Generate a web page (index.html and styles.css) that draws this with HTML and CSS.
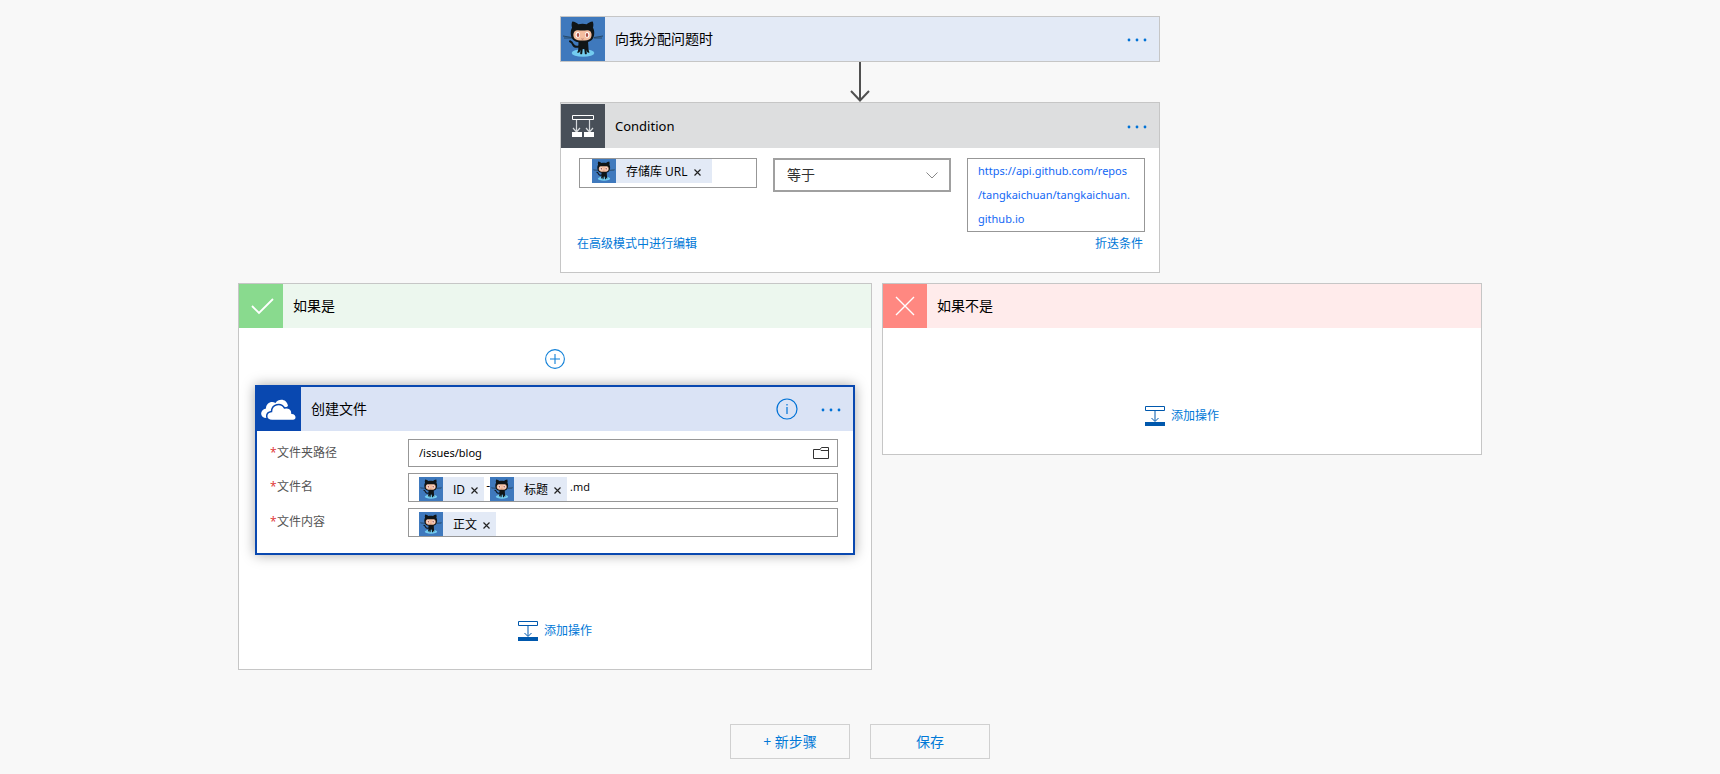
FILE: index.html
```
<!DOCTYPE html>
<html lang="zh-CN">
<head>
<meta charset="utf-8">
<meta name="viewport" content="width=device-width, initial-scale=1">
<title>Flow</title>
<link rel="stylesheet" href="styles.css">
</head>
<body>
<svg class="sprite" aria-hidden="true">
  <symbol id="octocat" viewBox="0 0 44 44">
    <rect width="44" height="44" fill="#3f79bd"/>
    <ellipse cx="22" cy="36" rx="11.300" ry="3.800" fill="#74cdf0"/>
    <path d="M2 19l9 1.500M42 19l-9 1.500M3 21l8 0M41 21l-8 0" stroke="#24435f" stroke-width=".9" fill="none"/>
    <path d="M18 29.500c-3 .8-5 .2-6-2-.6-1.500-1.500-2.600-3-3.200" fill="none" stroke="#101517" stroke-width="2" stroke-linecap="round"/>
    <path d="M17.500 24h9.500l.5 8q.3 2 1 3.500-1.500.8-2.400-.7l-.6-2 .3 4.200q-1.300.8-2-.3l-.5-4.700h-1.600l-.5 4.700q-.8 1.100-2 .3l.3-4.200-.8 2.200q-1 1.300-2.600.5 1-1.500 1.200-3.500z" fill="#101517"/>
    <path d="M11.300 4.500c-.9 2-.9 4.200-.2 6.200C9.300 13 9.400 18 10.800 21c1.800 3.700 6.200 4.500 10.700 4.500s8.900-.8 10.700-4.500c1.400-3 1.500-8-.3-10.300.7-2 .7-4.200-.2-6.200-2.500.1-4.500 1.500-6 2.800-2.700-.8-5.700-.8-8.400 0-1.500-1.300-3.500-2.700-6-2.800z" fill="#101517"/>
    <path d="M14.500 13.700c2.200-.9 4.500-.2 7-.2s4.800-.7 7 .2c2.500 1.200 2.700 5.500 1 7.700-1.600 1.800-4.700 2-8 2s-6.400-.2-8-2c-1.700-2.200-1.500-6.500 1-7.700z" fill="#f4bd9f"/>
    <ellipse cx="16.800" cy="17.800" rx="2.200" ry="2.900" fill="#fff"/>
    <ellipse cx="26.200" cy="17.800" rx="2.200" ry="2.900" fill="#fff"/>
    <ellipse cx="17" cy="17.900" rx="1.300" ry="2" fill="#aa5147"/>
    <ellipse cx="26" cy="17.900" rx="1.300" ry="2" fill="#aa5147"/>
    <path d="M20.500 21.800q1 .8 2 0" stroke="#a15a4e" stroke-width=".8" fill="none"/>
  </symbol>
  <symbol id="condition" viewBox="0 0 44 44">
    <rect width="44" height="44" fill="#484f58"/>
    <path d="M11.500 11.500h21v4h-21z" fill="none" stroke="#fff"/>
    <path d="M15.500 16v11M28.500 16v11M12 24l3.500 4 3.500-4M25 24l3.500 4 3.500-4" fill="none" stroke="#d5d8db" stroke-width="1.200"/>
    <path d="M11 28h10v5H11zM23 28h10v5H23z" fill="#fff"/>
  </symbol>
  <symbol id="insert" viewBox="0 0 20 20">
    <path d="M.5.500h19v4H.5z" fill="#fff" stroke="#0058ad"/>
    <path d="M10 5v10M6.500 12l3.500 3.500 3.500-3.500" fill="none" stroke="#0058ad"/>
    <path d="M0 16h20v4H0z" fill="#0058ad"/>
  </symbol>
  <symbol id="dots" viewBox="0 0 20 4">
    <circle cx="2" cy="2" r="1.400"/><circle cx="10" cy="2" r="1.400"/><circle cx="18" cy="2" r="1.400"/>
  </symbol>
</svg>

<main class="flow">
  <section class="card">
    <header class="head head-trigger">
      <svg class="tile"><use href="#octocat"/></svg>
      <h2 class="title">向我分配问题时</h2>
      <button class="menu" aria-label="更多"><svg class="dots"><use href="#dots"/></svg></button>
    </header>
  </section>

  <svg class="arrow" viewBox="0 0 20 40" aria-hidden="true"><path d="M10 0v39M1 29l9 9.500 9-9.500" fill="none" stroke="#505050" stroke-width="2"/></svg>

  <section class="card">
    <header class="head head-condition">
      <svg class="tile"><use href="#condition"/></svg>
      <h2 class="title latin">Condition</h2>
      <button class="menu" aria-label="更多"><svg class="dots"><use href="#dots"/></svg></button>
    </header>
    <div class="rule">
      <div class="operand operand-left">
        <span class="token token-wide"><svg class="badge"><use href="#octocat"/></svg><span>存储库 URL</span><button class="remove" aria-label="删除"><svg class="x" viewBox="0 0 7 7"><path d="M.5.500l6 6M6.500.500l-6 6"/></svg></button></span>
      </div>
      <div class="choice">
        <select class="select" aria-label="运算符"><option>等于</option></select>
        <svg class="chevron" viewBox="0 0 12 7" aria-hidden="true"><path d="M.5.500L6 6 11.500.500"/></svg>
      </div>
      <div class="operand operand-right">https://api.github.com/repos<br>/tangkaichuan/tangkaichuan.<br>github.io</div>
    </div>
    <div class="links"><a class="link" href="#">在高级模式中进行编辑</a><a class="link" href="#">折迭条件</a></div>
  </section>

  <div class="branches">
    <section class="branch branch-yes">
      <header class="head head-yes">
        <svg class="tile tile-yes" viewBox="0 0 44 44"><path d="M13 22l7 7 14-14" fill="none" stroke="#fff" stroke-width="1.800"/></svg>
        <h2 class="title">如果是</h2>
      </header>
      <button class="plus" aria-label="插入步骤"><svg class="plus-icon" viewBox="0 0 20 20"><circle cx="10" cy="10" r="9.400"/><path d="M10 5v10M5 10h10"/></svg></button>
      <section class="action">
        <header class="head head-action">
          <svg class="tile tile-cloud" viewBox="0 0 44 44">
            <path d="M13 31H9.500C2.500 31 2.500 22.500 9 21.500 9 16 14.500 13.500 18.500 16c3-5 11.500-4.500 12.500 3z" fill="#fff"/>
            <path d="M15 33.400C8 33 8 25.500 14.500 24.500c.3-7.500 9.500-9.500 13-3.500 5-1 7.500 2 7.500 5.300 5.500.7 5.500 7.100 1 7.100z" fill="#fff" stroke="#0948b0" stroke-width="1.500"/>
          </svg>
          <h2 class="title">创建文件</h2>
          <button class="info" aria-label="信息"><svg class="info-icon" viewBox="0 0 22 22"><circle cx="11" cy="11" r="10"/><path d="M11 9v7M11 6v1.500"/></svg></button>
          <button class="menu" aria-label="更多"><svg class="dots"><use href="#dots"/></svg></button>
        </header>
        <div class="fields">
          <label class="label" for="path"><span class="star">*</span>文件夹路径</label>
          <div class="box box-path"><input class="path" id="path" value="/issues/blog"><button class="browse" aria-label="浏览"><svg class="folder" viewBox="0 0 16 12"><path d="M.5 2.500H7L8.500.500h7v11H.5zM7 2.500l1 1h7.500"/></svg></button></div>
          <span class="label"><span class="star">*</span>文件名</span>
          <div class="box box-tokens">
            <span class="token"><svg class="badge"><use href="#octocat"/></svg><span>ID</span><button class="remove" aria-label="删除"><svg class="x" viewBox="0 0 7 7"><path d="M.5.500l6 6M6.500.500l-6 6"/></svg></button></span><span class="joint">-</span><span class="token"><svg class="badge"><use href="#octocat"/></svg><span>标题</span><button class="remove" aria-label="删除"><svg class="x" viewBox="0 0 7 7"><path d="M.5.500l6 6M6.500.500l-6 6"/></svg></button></span><span class="suffix">.md</span>
          </div>
          <span class="label"><span class="star">*</span>文件内容</span>
          <div class="box box-tokens">
            <span class="token"><svg class="badge"><use href="#octocat"/></svg><span>正文</span><button class="remove" aria-label="删除"><svg class="x" viewBox="0 0 7 7"><path d="M.5.500l6 6M6.500.500l-6 6"/></svg></button></span>
          </div>
        </div>
      </section>
      <button class="add"><svg class="add-icon"><use href="#insert"/></svg>添加操作</button>
    </section>

    <section class="branch branch-no">
      <header class="head head-no">
        <svg class="tile tile-no" viewBox="0 0 44 44"><path d="M13 13l18 18M31 13L13 31" fill="none" stroke="#fff" stroke-width="1.400"/></svg>
        <h2 class="title">如果不是</h2>
      </header>
      <button class="add"><svg class="add-icon"><use href="#insert"/></svg>添加操作</button>
    </section>
  </div>

  <div class="footer"><button class="button">+ 新步骤</button><button class="button">保存</button></div>
</main>
</body>
</html>
```
FILE: styles.css
```
* { box-sizing: border-box; }

body {
  margin: 0;
  background: #f8f8f8;
  color: #000;
  font: 12px/24px "Open Sans", "Noto Sans CJK SC", sans-serif;
}

button, input, select { font: inherit; color: inherit; }
button { padding: 0; border: 0; background: none; cursor: pointer; }
svg { display: block; flex: none; }

.sprite { position: absolute; width: 0; height: 0; }

.flow {
  display: flex;
  flex-direction: column;
  align-items: center;
  padding: 16px;
}

.card {
  width: 100%;
  max-width: 600px;
  border: 1px solid #c6c6c6;
  background: #fff;
}

.head { display: flex; align-items: center; min-height: 44px; }
.head-trigger { background: #e3eaf6; }
.head-condition { padding-top: 1px; background: #dddedf; }
.head-yes { background: #ecf7ee; }
.head-no { background: #ffebeb; }
.head-action { background: #dae3f5; }

.tile { width: 44px; height: 44px; }
.tile-yes { background: #89da8e; }
.tile-no { background: #ff8881; }
.tile-cloud { background: #0948b0; }

.title { flex: 1; margin: 0; padding-left: 10px; font-size: 14px; font-weight: 400; }
.latin { font-family: "Noto Sans", "Noto Sans CJK SC", sans-serif; font-size: 13px; }

.menu { padding: 12px 12px 10px 10px; fill: #0072d6; }
.dots { width: 20px; height: 4px; }

.arrow { width: 20px; height: 40px; }

.rule {
  display: grid;
  grid-template-columns: repeat(3, 1fr);
  align-items: start;
  gap: 16px;
  padding: 10px 14px 0 18px;
}

.operand { border: 1px solid #979797; }
.operand-left { min-height: 30px; padding-left: 12px; }
.operand-right {
  padding-left: 10px;
  color: #1267f5;
  font-family: "Noto Sans", "Noto Sans CJK SC", sans-serif;
  font-size: 11px;
}

.choice { display: grid; align-items: center; }
.select {
  grid-area: 1 / 1;
  width: 100%;
  height: 34px;
  padding: 0 12px;
  border: 2px solid #a0a0a0;
  border-radius: 0;
  appearance: none;
  background: #fff;
  color: #333;
  font-size: 14px;
}
.chevron {
  grid-area: 1 / 1;
  justify-self: end;
  width: 12px;
  height: 7px;
  margin-right: 13px;
  fill: none;
  stroke: #888;
  pointer-events: none;
}

.token { display: inline-flex; align-items: center; height: 24px; padding-right: 6px; background: #e3eaf6; line-height: 22px; vertical-align: top; }
.token > span { padding-top: 2px; }
.token-wide { padding-right: 11px; }
.badge { width: 24px; height: 24px; margin-right: 10px; }
.remove { padding: 3px 0 0 6px; }
.x { width: 7px; height: 7px; fill: none; stroke: #222; stroke-width: 1.2; }

.links { display: flex; justify-content: space-between; padding: 0 16px 16px; }
.link { color: #0078d7; text-decoration: none; }

.branches { display: flex; justify-content: center; align-items: flex-start; gap: 10px; width: 100%; padding-top: 10px; }
.branch { display: flex; flex-direction: column; align-items: center; border: 1px solid #c6c6c6; background: #fff; }
.branch > .head { align-self: stretch; }
.branch-yes { flex: 0 1 634px; padding-bottom: 26px; }
.branch-no { flex: 0 1 600px; padding-bottom: 26px; }

.plus { padding: 21px 0 16px; }
.plus-icon { width: 20px; height: 20px; fill: none; stroke: #1180d8; stroke-width: 1.1; }

.action { align-self: stretch; margin: 0 16px; border: 2px solid #0948b0; background: #fff; box-shadow: 0 0 12px rgba(0, 0, 0, 0.35); }

.info-icon { width: 22px; height: 22px; margin-right: 13px; fill: none; stroke: #0072d6; stroke-width: 1.2; }

.fields {
  display: grid;
  grid-template-columns: 138px 1fr;
  row-gap: 6px;
  padding: 8px 15px 16px 13px;
}
.label { padding-top: 2px; color: #555; }
.star { display: inline-block; width: 7px; color: #e03030; }
.box { display: flex; border: 1px solid #979797; }
.box-path { height: 28px; align-items: center; padding: 0 8px 0 10px; }
.box-tokens { height: 29px; padding: 3px 10px 0; }
.path {
  flex: 1;
  min-width: 0;
  padding: 0;
  border: 0;
  outline: 0;
  background: none;
  font-family: "Noto Sans", "Noto Sans CJK SC", sans-serif;
  font-size: 11px;
}
.folder { width: 16px; height: 12px; fill: none; stroke: #333; }
.joint { width: 6px; line-height: 18px; text-align: right; }
.suffix { padding-left: 3px; font-size: 11px; line-height: 20px; }

.add { display: flex; align-items: center; gap: 6px; margin-top: 64px; color: #0078d7; }
.branch-no .add { margin-top: 76px; }
.add-icon { width: 20px; height: 20px; }

.footer { display: flex; gap: 20px; padding-top: 54px; }
.button { width: 120px; height: 35px; border: 1px solid #d0d0d0; color: #0078d7; font-size: 14px; }
```
